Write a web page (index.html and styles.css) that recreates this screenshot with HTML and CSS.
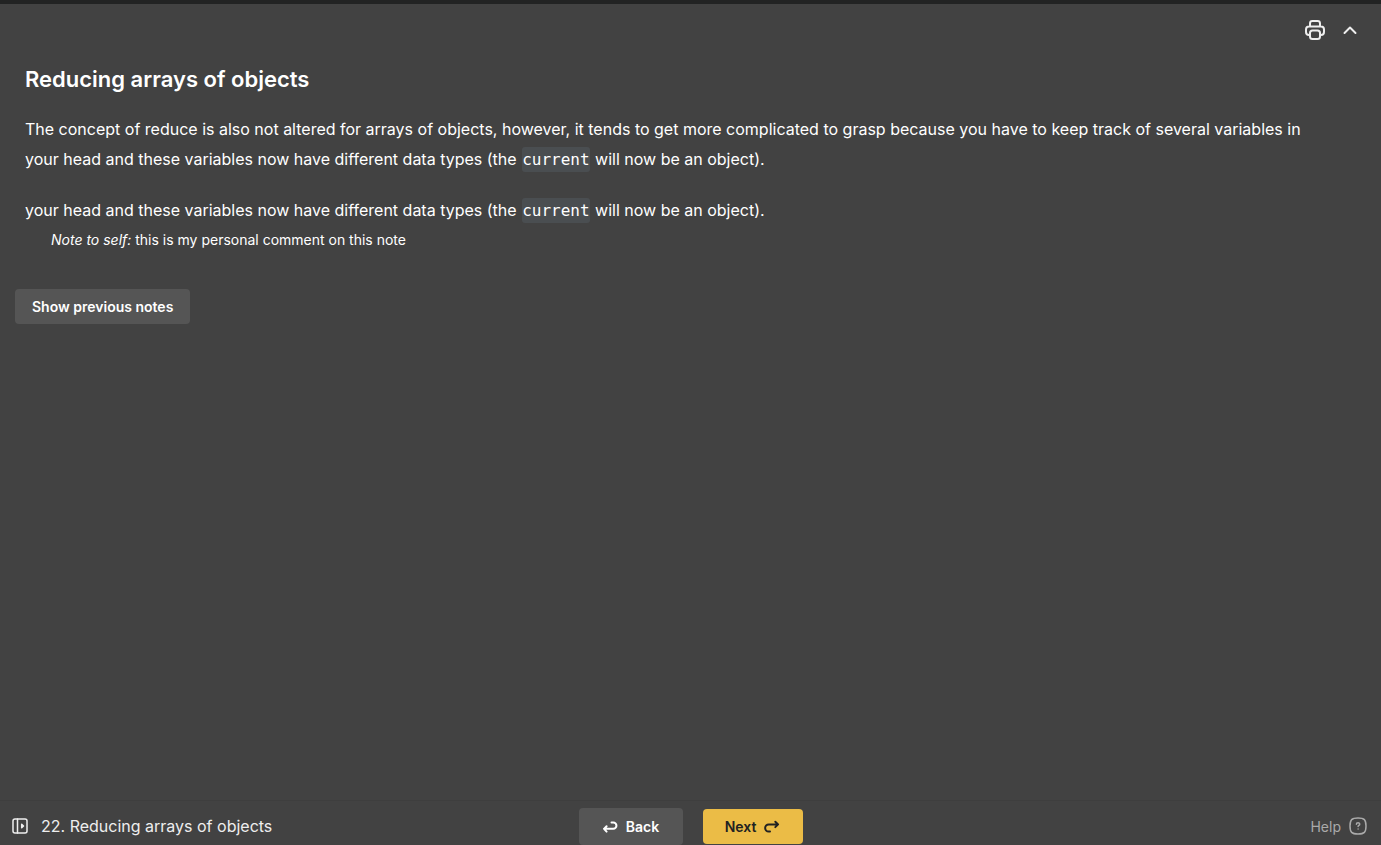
FILE: index.html
```html
<!DOCTYPE html>
<html lang="en">
<head>
<meta charset="utf-8">
<meta name="viewport" content="width=device-width, initial-scale=1">
<title>Reducing arrays of objects</title>
<link rel="stylesheet" href="styles.css">
</head>
<body>
<div class="page">
  <header class="toolbar">
    <button class="icon-button" type="button" aria-label="Print">
      <svg width="20" height="20" viewBox="0 0 20 20"><path d="M5 6V3.4Q5 1 7.4 1h5.2Q15 1 15 3.4V6M5 15H4Q1 15 1 12V9.5Q1 6.500 4 6.500h12q3 0 3 3V12q0 3-3 3h-1M7.500 10.500h5Q15 10.500 15 13v3.500Q15 19 12.500 19h-5Q5 19 5 16.500V13Q5 10.500 7.500 10.500Z"/></svg>
    </button>
    <button class="icon-button" type="button" aria-label="Collapse">
      <svg width="14" height="20" viewBox="0 0 14 20"><path d="M1.500 13 7 7.500l5.500 5.500"/></svg>
    </button>
  </header>
  <main class="content">
    <article class="note">
      <h1 class="title">Reducing arrays of objects</h1>
      <p class="text">The concept of reduce is also not altered for arrays of objects, however, it tends to get more complicated to grasp because you have to keep track of several variables in your head and these variables now have different data types (the <code class="code">current</code> will now be an object).</p>
      <p class="text">your head and these variables now have different data types (the <code class="code">current</code> will now be an object).</p>
      <p class="comment"><em>Note to self:</em> this is my personal comment on this note</p>
    </article>
    <button class="button" type="button">Show previous notes</button>
  </main>
  <footer class="footer">
    <div class="lesson">
      <button class="icon-button" type="button" aria-label="Open sidebar">
        <svg width="16" height="16" viewBox="0 0 16 16"><rect class="thin" x="1" y="1" width="14" height="14" rx="2"/><path class="thin" d="M5.500 1v14"/><path class="thin" d="M9.700 6.200l1.800 1.800-1.800 1.800Z"/></svg>
      </button>
      <span>22. Reducing arrays of objects</span>
    </div>
    <nav class="steps" aria-label="Lesson steps">
      <button class="button back" type="button">
        <svg width="16" height="14" viewBox="0 0 16 14"><path d="M9.500 2.500h1.800a2.900 2.900 0 0 1 0 6.300H2M4.600 6.200 2 8.900l2.600 2.700"/></svg>
        Back
      </button>
      <button class="button next" type="button">
        Next
        <svg width="16" height="14" viewBox="0 0 16 14"><path d="M6 11.500H4.700a3.500 3.500 0 0 1 0-7.100h9.300M11.300 1.700l2.800 2.700-2.800 2.700"/></svg>
      </button>
    </nav>
    <a class="help" href="#help">Help
      <svg width="18" height="18" viewBox="0 0 18 18"><path class="thin" d="M9 1c6.300 0 8 1.700 8 8s-1.700 8-8 8-8-1.700-8-8 1.700-8 8-8Z"/><path class="thin" d="M7.400 7.200c0-2 3.300-2 3.300 0 0 1.200-1.600 1.100-1.600 2.300M9.100 12v.1"/></svg>
    </a>
  </footer>
</div>
</body>
</html>
```
FILE: styles.css
```css
* {
  box-sizing: border-box;
}

body {
  margin: 0;
  background: #424242;
  color: #fff;
  font-family: Inter, "Liberation Sans", sans-serif;
  font-size: 16px;
}

.page {
  display: flex;
  flex-direction: column;
  min-height: 100vh;
  border-top: 4px solid #222323;
}

svg {
  flex: none;
  fill: none;
  stroke: currentColor;
  stroke-width: 2;
  stroke-linecap: round;
  stroke-linejoin: round;
}

.thin {
  stroke-width: 1.5;
}

.icon-button {
  display: flex;
  padding: 0;
  border: 0;
  background: none;
  color: #eee;
}

.toolbar {
  display: flex;
  justify-content: flex-end;
  gap: 18px;
  padding: 16px 24px 0;
}

.content {
  flex: 1;
  padding: 24px 15px;
}

.note {
  padding: 0 50px 0 10px;
  margin-bottom: 34px;
}

.title {
  margin: 0 0 20px;
  font-size: 22px;
  line-height: 30px;
  font-weight: 600;
}

.text {
  margin: 0 0 21px;
  line-height: 30px;
}

.code {
  margin: 0 1px;
  padding: 3px 0;
  border-radius: 3px;
  background: #4a4e51;
  font-family: "DejaVu Sans Mono", monospace;
  font-size: 16px;
  line-height: 20px;
}

.comment {
  margin: -21px 0 0 26px;
  font-size: 14px;
  line-height: 30px;
}

.button {
  display: flex;
  align-items: center;
  justify-content: center;
  height: 35px;
  padding: 0 17px;
  border: 0;
  border-radius: 4px;
  background: #555;
  color: #fff;
  font-family: inherit;
  font-size: 14px;
  font-weight: 600;
}

.footer {
  display: grid;
  grid-template-columns: 1fr auto 1fr;
  align-items: center;
  height: 45px;
  padding: 7px 12px 0;
  border-top: 1px solid #3e3e3e;
}

.lesson {
  display: flex;
  align-items: center;
  gap: 13px;
  padding-bottom: 2px;
  color: #eee;
}

.steps {
  display: flex;
  align-items: center;
  gap: 20px;
}

.back {
  gap: 8px;
  width: 104px;
  height: 37px;
}

.next {
  gap: 8px;
  width: 100px;
  background: #ebbc46;
  color: #222;
}

.help {
  display: flex;
  align-items: center;
  justify-self: end;
  gap: 8px;
  padding: 0 2px 1px 0;
  color: #aaa;
  font-size: 14px;
  text-decoration: none;
}
```
